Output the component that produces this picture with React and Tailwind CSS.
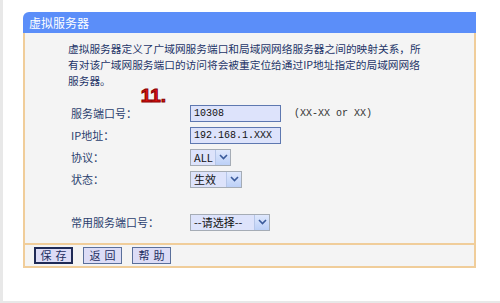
const cjk = { fontFamily: '"SimSun", "Noto Sans CJK SC", "Liberation Sans", sans-serif' }
const mono = { fontFamily: '"Liberation Mono", "Noto Sans CJK SC", monospace' }

function Chevron() {
  return (
    <span className="flex h-full w-[15px] items-center justify-center border-l border-[#b6c6e8] bg-gradient-to-b from-[#dfe8fd] to-[#bcd0f7]">
      <svg width="9" height="6" viewBox="0 0 9 6" fill="none" stroke="#3a5a9a" strokeWidth="1.6">
        <polyline points="1,1 4.5,4.5 8,1" />
      </svg>
    </span>
  )
}

function Select({ value, width }) {
  return (
    <div className={`flex h-[17px] items-center border border-[#a5acb5] bg-[#dde3fb] ${width}`}>
      <span className="flex-1 pl-[3px] text-[11px] leading-none text-[#111]" style={cjk}>{value}</span>
      <Chevron />
    </div>
  )
}

function Row({ label, children }) {
  return (
    <div className="flex h-[22px] items-center">
      <span className="w-[122px] pl-[3px] text-[11px] text-[#2b3f6e]" style={cjk}>{label}</span>
      {children}
    </div>
  )
}

function Btn({ children, primary }) {
  return (
    <button
      type="button"
      className={`flex h-[17px] w-[39px] items-center justify-center bg-[#dcdcf6] text-[11px] tracking-[4px] text-[#1d2d60] ${primary ? 'border-2 border-[#1f2a55]' : 'border border-[#5a6f9a]'}`}
      style={cjk}
    >
      <span className="pl-[4px]">{children}</span>
    </button>
  )
}

export default function App() {
  return (
    <div className="h-[303px] w-[500px] border-b-2 border-l-[3px] border-[#e8e8e8] bg-white pt-[12px] pl-[20px]">
      <div className="w-[453px]">
        <div className="flex h-[21px] items-center rounded-tl-[6px] bg-[#5b8ef9] pl-[6px] text-[12px] text-white" style={cjk}>
          虚拟服务器
        </div>
        <div className="h-[210px] border-x-2 border-[#f0cd9a] bg-[#f4f4f4] pt-[8px] pl-[43px]">
          <div className="text-[10.7px] leading-[16px] text-[#1e3568]" style={cjk}>
            <div>虚拟服务器定义了广域网服务端口和局域网网络服务器之间的映射关系，所</div>
            <div>有对该广域网服务端口的访问将会被重定位给通过IP地址指定的局域网网络</div>
            <div className="flex h-[16px] items-start">
              <span>服务器。</span>
              <span
                className="ml-[30px] mt-[13px] text-[19px] font-black leading-none text-[#e01212]"
                style={{ fontFamily: '"Liberation Sans", sans-serif', WebkitTextStroke: '1px #8a0000' }}
              >
                11.
              </span>
            </div>
          </div>
          <div className="mt-[13px] flex flex-col">
            <Row label="服务端口号：">
              <div className="flex h-[17px] w-[91px] items-center border border-[#5e78b0] bg-[#dde3fb] pl-[3px] text-[10px] text-[#111]" style={mono}>10308</div>
              <span className="ml-[13px] text-[10px] text-[#333]" style={mono}>(XX-XX or XX)</span>
            </Row>
            <Row label="IP地址：">
              <div className="flex h-[17px] w-[91px] items-center border border-[#5e78b0] bg-[#dde3fb] pl-[3px] text-[10px] text-[#111]" style={mono}>192.168.1.XXX</div>
            </Row>
            <Row label="协议：">
              <Select value="ALL" width="w-[41px]" />
            </Row>
            <Row label="状态：">
              <Select value="生效" width="w-[52px]" />
            </Row>
            <div className="mt-[21px]">
              <Row label="常用服务端口号：">
                <Select value="--请选择--" width="w-[80px]" />
              </Row>
            </div>
          </div>
        </div>
        <div className="flex h-[25px] items-center gap-[10px] border-2 border-[#f0cd9a] bg-[#f4f4f4] pl-[9px]">
          <Btn primary>保存</Btn>
          <Btn>返回</Btn>
          <Btn>帮助</Btn>
        </div>
      </div>
    </div>
  )
}
